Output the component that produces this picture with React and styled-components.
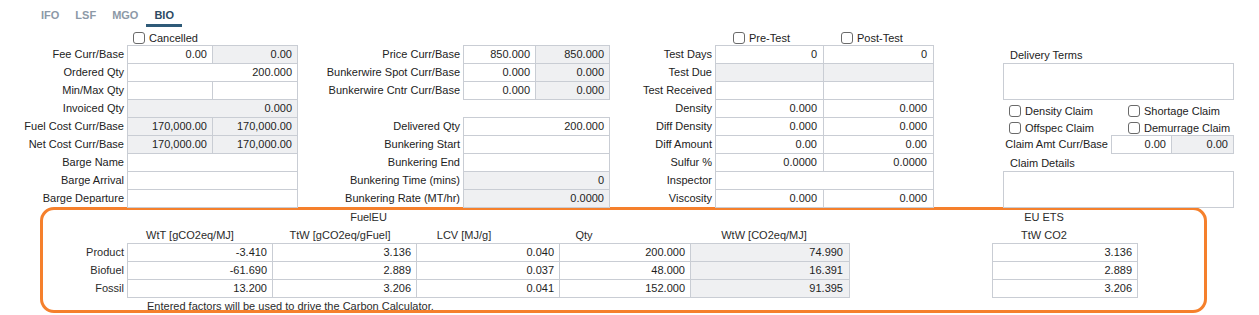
import React from "react";
import styled, { createGlobalStyle } from "styled-components";

const GlobalStyle = createGlobalStyle`
  body {
    margin: 0;
    background: #ffffff;
    font-family: "Liberation Sans", Arial, sans-serif;
    font-size: 11px;
    color: #222222;
  }
`;

const BORDER = "#c9cdd4";
const GRAY = "#eff0f2";

const Page = styled.div`
  width: 1259px;
`;

const TabBar = styled.div`
  display: flex;
  padding-left: 33px;
  height: 27px;
`;

const Tab = styled.div`
  box-sizing: border-box;
  height: 27px;
  padding: 7px 8px 0;
  line-height: 17px;
  font-weight: bold;
  color: ${(p) => (p.$active ? "#2d4a63" : "#8c99a7")};
  border-bottom: 3px solid ${(p) => (p.$active ? "#2e5a78" : "transparent")};
`;

const Form = styled.div`
  display: flex;
  align-items: flex-start;
  height: 180px;
`;

const Column = styled.div`
  display: grid;
  grid-template-columns: ${(p) => p.$cols};
  grid-auto-rows: 18px;
`;

const Label = styled.div`
  text-align: right;
  padding-right: 3px;
  line-height: 19px;
  white-space: nowrap;
`;

const Field = styled.div`
  box-sizing: border-box;
  margin: 0 -1px -1px 0;
  border: 1px solid ${BORDER};
  background: ${(p) => (p.$gray ? GRAY : "#ffffff")};
  grid-column: ${(p) => (p.$span ? "span 2" : "auto")};
  text-align: right;
  padding-right: ${(p) => p.$pad || 5}px;
  line-height: 17px;
  color: #1e1e1e;
  white-space: nowrap;
  overflow: hidden;
`;

const Spacer = styled.div`
  grid-column: 1 / -1;
`;

const CheckItem = styled.label`
  box-sizing: border-box;
  display: flex;
  align-items: center;
  gap: 4px;
  height: ${(p) => p.$h || 18}px;
  padding-top: ${(p) => (p.$top === undefined ? 4 : p.$top)}px;
  padding-left: ${(p) => p.$indent || 0}px;
  grid-column: ${(p) => (p.$span ? "span 2" : "auto")};
  white-space: nowrap;
`;

const Box = styled.span`
  box-sizing: border-box;
  flex: none;
  width: 12px;
  height: 12px;
  border: 1px solid #6a6a6a;
  border-radius: 3px;
  background: #ffffff;
`;

const SideColumn = styled.div`
  display: flex;
  flex-direction: column;
  margin-left: 70px;
  padding-top: 18px;
  width: 231px;
`;

const SideLabel = styled.div`
  height: 18px;
  line-height: 20px;
  padding-left: 7px;
`;

const TextArea = styled.div`
  box-sizing: border-box;
  height: 37px;
  margin-bottom: -1px;
  border: 1px solid ${BORDER};
  background: #ffffff;
`;

const ClaimChecks = styled.div`
  display: grid;
  grid-template-columns: 119px 1fr;
  grid-auto-rows: 17px;
  padding: 3px 0 0 6px;
`;

const ClaimRow = styled(Column)`
  margin-top: -1px;
`;

const CarbonBox = styled.div`
  box-sizing: border-box;
  margin-left: 40px;
  width: 1167px;
  height: 106px;
  border: 3px solid #f5802c;
  border-radius: 14px;
  color: #2b2b2b;
`;

const HeadRow = styled.div`
  display: grid;
  grid-template-columns: ${(p) => p.$cols};
  height: ${(p) => p.$h}px;
  padding-top: ${(p) => p.$top || 0}px;
  line-height: ${(p) => p.$lh}px;
  box-sizing: border-box;
`;

const Head = styled.div`
  grid-column: ${(p) => p.$col || "auto"};
  text-align: center;
  white-space: nowrap;
`;

const DataGrid = styled.div`
  display: grid;
  grid-template-columns: 84px 145px 144px 143px 131px 159px 143px 145px;
  grid-auto-rows: 18px;
  height: 55px;
`;

const Gap = styled.div``;

const Note = styled.div`
  padding: 2px 0 0 104px;
  line-height: 13px;
`;

const tabs = ["IFO", "LSF", "MGO", "BIO"];

const carbonRows = [
  { name: "Product", wtt: "-3.410", ttw: "3.136", lcv: "0.040", qty: "200.000", wtw: "74.990", ets: "3.136" },
  { name: "Biofuel", wtt: "-61.690", ttw: "2.889", lcv: "0.037", qty: "48.000", wtw: "16.391", ets: "2.889" },
  { name: "Fossil", wtt: "13.200", ttw: "3.206", lcv: "0.041", qty: "152.000", wtw: "91.395", ets: "3.206" },
];

const Check = ({ children, ...rest }) => (
  <CheckItem {...rest}>
    <Box />
    <span>{children}</span>
  </CheckItem>
);

const App = () => (
  <Page>
    <GlobalStyle />
    <TabBar>
      {tabs.map((t) => (
        <Tab key={t} $active={t === "BIO"}>
          {t}
        </Tab>
      ))}
    </TabBar>

    <Form>
      <Column $cols="127px 85px 85px">
        <Label />
        <Check $span $indent={6}>Cancelled</Check>
        <Label>Fee Curr/Base</Label>
        <Field>0.00</Field>
        <Field $gray>0.00</Field>
        <Label>Ordered Qty</Label>
        <Field $span>200.000</Field>
        <Label>Min/Max Qty</Label>
        <Field />
        <Field />
        <Label>Invoiced Qty</Label>
        <Field $span $gray>0.000</Field>
        <Label>Fuel Cost Curr/Base</Label>
        <Field $gray>170,000.00</Field>
        <Field $gray>170,000.00</Field>
        <Label>Net Cost Curr/Base</Label>
        <Field $gray>170,000.00</Field>
        <Field $gray>170,000.00</Field>
        <Label>Barge Name</Label>
        <Field $span />
        <Label>Barge Arrival</Label>
        <Field $span />
        <Label>Barge Departure</Label>
        <Field $span />
      </Column>

      <Column $cols="166px 72px 74px">
        <Spacer />
        <Label>Price Curr/Base</Label>
        <Field>850.000</Field>
        <Field $gray>850.000</Field>
        <Label>Bunkerwire Spot Curr/Base</Label>
        <Field>0.000</Field>
        <Field $gray>0.000</Field>
        <Label>Bunkerwire Cntr Curr/Base</Label>
        <Field>0.000</Field>
        <Field $gray>0.000</Field>
        <Spacer />
        <Label>Delivered Qty</Label>
        <Field $span>200.000</Field>
        <Label>Bunkering Start</Label>
        <Field $span />
        <Label>Bunkering End</Label>
        <Field $span />
        <Label>Bunkering Time (mins)</Label>
        <Field $span $gray>0</Field>
        <Label>Bunkering Rate (MT/hr)</Label>
        <Field $span $gray>0.0000</Field>
      </Column>

      <Column $cols="106px 108px 110px">
        <Label />
        <Check $indent={18}>Pre-Test</Check>
        <Check $indent={18}>Post-Test</Check>
        <Label>Test Days</Label>
        <Field $pad={6}>0</Field>
        <Field $pad={6}>0</Field>
        <Label>Test Due</Label>
        <Field $gray />
        <Field $gray />
        <Label>Test Received</Label>
        <Field />
        <Field />
        <Label>Density</Label>
        <Field $pad={6}>0.000</Field>
        <Field $pad={6}>0.000</Field>
        <Label>Diff Density</Label>
        <Field $pad={6}>0.000</Field>
        <Field $pad={6}>0.000</Field>
        <Label>Diff Amount</Label>
        <Field $pad={6}>0.00</Field>
        <Field $pad={6}>0.00</Field>
        <Label>Sulfur %</Label>
        <Field $pad={6}>0.0000</Field>
        <Field $pad={6}>0.0000</Field>
        <Label>Inspector</Label>
        <Field $span />
        <Label>Viscosity</Label>
        <Field $pad={6}>0.000</Field>
        <Field $pad={6}>0.000</Field>
      </Column>

      <SideColumn>
        <SideLabel>Delivery Terms</SideLabel>
        <TextArea />
        <ClaimChecks>
          <Check $h={17} $top={0}>Density Claim</Check>
          <Check $h={17} $top={0}>Shortage Claim</Check>
          <Check $h={17} $top={0}>Offspec Claim</Check>
          <Check $h={17} $top={0}>Demurrage Claim</Check>
        </ClaimChecks>
        <ClaimRow $cols="108px 60px 62px">
          <Label>Claim Amt Curr/Base</Label>
          <Field>0.00</Field>
          <Field $gray>0.00</Field>
        </ClaimRow>
        <SideLabel>Claim Details</SideLabel>
        <TextArea />
      </SideColumn>
    </Form>

    <CarbonBox>
      <HeadRow $cols="84px 483px 382px 104px" $h={14} $lh={14}>
        <Head $col="2">FuelEU</Head>
        <Head $col="4">EU ETS</Head>
      </HeadRow>
      <HeadRow $cols="84px 126px 174px 74px 166px 194px 131px 104px" $h={19} $top={4} $lh={15}>
        <Head $col="2">WtT [gCO2eq/MJ]</Head>
        <Head>TtW [gCO2eq/gFuel]</Head>
        <Head>LCV [MJ/g]</Head>
        <Head>Qty</Head>
        <Head>WtW [CO2eq/MJ]</Head>
        <Head $col="8">TtW CO2</Head>
      </HeadRow>
      <DataGrid>
        {carbonRows.map((r) => (
          <React.Fragment key={r.name}>
            <Label>{r.name}</Label>
            <Field>{r.wtt}</Field>
            <Field>{r.ttw}</Field>
            <Field>{r.lcv}</Field>
            <Field>{r.qty}</Field>
            <Field $gray $pad={6}>{r.wtw}</Field>
            <Gap />
            <Field>{r.ets}</Field>
          </React.Fragment>
        ))}
      </DataGrid>
      <Note>Entered factors will be used to drive the Carbon Calculator.</Note>
    </CarbonBox>
  </Page>
);

export default App;
